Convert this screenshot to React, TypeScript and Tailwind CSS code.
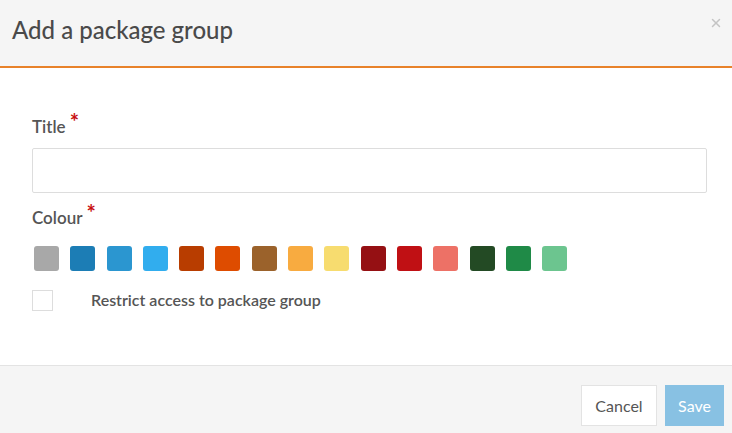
import { X } from 'lucide-react';

const swatches = [
  '#a8a8a8',
  '#1c7db5',
  '#2b96d0',
  '#31adee',
  '#b83d00',
  '#de4c00',
  '#9b622b',
  '#f8ab40',
  '#f7dc6f',
  '#951013',
  '#c01014',
  '#ed7166',
  '#234a24',
  '#1f8a47',
  '#6cc58f',
];

function Required() {
  return <span className="relative -top-[4px] ml-[4px] text-[22px] font-bold leading-none text-[#c81010]">*</span>;
}

export default function App() {
  return (
    <div className="flex h-[433px] w-[732px] flex-col bg-white font-['Lato',sans-serif] text-[#555]">
      {/* Header */}
      <header className="flex h-[68px] shrink-0 items-start justify-between border-b-2 border-[#e8822a] bg-[#f5f5f5] pl-3 pr-[9px]">
        <h1 className="mt-[14px] text-[24px] font-medium leading-[32px] text-[#4a4a4a]">Add a package group</h1>
        <button className="mt-[16px] text-[#c4c4c4]">
          <X className="h-[14px] w-[14px]" strokeWidth={2.5} />
        </button>
      </header>

      {/* Body */}
      <div className="flex flex-1 flex-col px-8 pt-[47px]">
        <label className="flex items-start text-[17px] font-semibold leading-[24px] text-[#555]">
          Title
          <Required />
        </label>
        <input className="mt-[9px] h-[45px] w-[675px] rounded-[2px] border border-[#ddd] px-3 outline-none" />

        <label className="mt-[13px] flex items-start text-[17px] font-semibold leading-[24px] text-[#555]">
          Colour
          <Required />
        </label>
        <div className="mt-[16px] flex gap-[11.3px] pl-[2px]">
          {swatches.map((c) => (
            <div key={c} className="h-[25px] w-[25px] rounded-[3px]" style={{ backgroundColor: c }} />
          ))}
        </div>

        <div className="mt-[17px] flex items-center">
          <div className="h-[21px] w-[21px] border border-[#ddd] bg-white" />
          <span className="ml-[38px] text-[16px] font-semibold text-[#555]">Restrict access to package group</span>
        </div>
      </div>

      {/* Footer */}
      <footer className="flex h-[68px] shrink-0 items-start justify-end gap-2 border-t border-[#e3e3e3] bg-[#f5f5f5] pr-2 pt-[19px]">
        <button className="h-[41px] w-[76px] border border-[#e3e3e3] bg-white text-[16px] text-[#555]">Cancel</button>
        <button className="h-[41px] w-[59px] border border-[#88c1e3] bg-[#88c1e3] text-[16px] text-white">Save</button>
      </footer>
    </div>
  );
}
